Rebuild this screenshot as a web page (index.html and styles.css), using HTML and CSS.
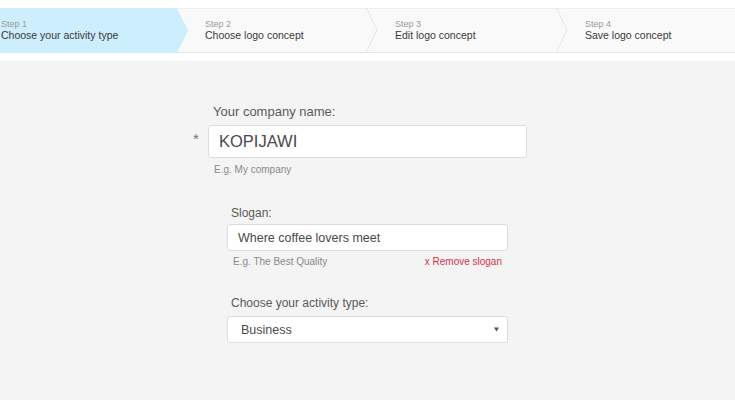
FILE: index.html
```html
<!DOCTYPE html>
<html>
<head>
<meta charset="utf-8">
<link rel="stylesheet" href="styles.css">
</head>
<body>
<div class="topgap"></div>
<nav class="steps">
  <div class="step step-active">
    <span class="step-num">Step 1</span>
    <span class="step-title">Choose your activity type</span>
  </div>
  <div class="step">
    <span class="step-num">Step 2</span>
    <span class="step-title">Choose logo concept</span>
    <svg class="chev" width="12" height="44" viewBox="0 0 12 44"><polyline points="0.5,0 11,22 0.5,44" fill="none" stroke="#e4e4e4" stroke-width="1"/></svg>
  </div>
  <div class="step">
    <span class="step-num">Step 3</span>
    <span class="step-title">Edit logo concept</span>
    <svg class="chev" width="12" height="44" viewBox="0 0 12 44"><polyline points="0.5,0 11,22 0.5,44" fill="none" stroke="#e4e4e4" stroke-width="1"/></svg>
  </div>
  <div class="step step-last">
    <span class="step-num">Step 4</span>
    <span class="step-title">Save logo concept</span>
  </div>
</nav>
<div class="midgap"></div>
<main class="panel">
  <form class="form">
    <label class="label-main">Your company name:</label>
    <div class="field-row">
      <span class="req">*</span>
      <div class="input input-main">KOPIJAWI</div>
    </div>
    <div class="hint hint-main">E.g. My company</div>

    <div class="sub">
      <label class="label-sub label-slogan">Slogan:</label>
      <div class="input input-sub">Where coffee lovers meet</div>
      <div class="hint-row">
        <span class="hint">E.g. The Best Quality</span>
        <span class="remove">x Remove slogan</span>
      </div>

      <label class="label-sub label-type">Choose your activity type:</label>
      <div class="input input-sub select">
        <span>Business</span>
        <svg class="caret" width="5" height="5" viewBox="0 0 5 5"><polygon points="0,0.5 5,0.5 2.5,4.5" fill="#555"/></svg>
      </div>
    </div>
  </form>
</main>
</body>
</html>
```

FILE: styles.css
```css
html, body {
  margin: 0;
  padding: 0;
  background: #ffffff;
  font-family: "Liberation Sans", Arial, sans-serif;
  color: #333;
}

.topgap { height: 8px; }

.steps {
  display: flex;
  height: 44px;
  background: #f9f9f9;
  border-bottom: 1px solid #e6e6e6;
  box-shadow: inset 0 1px 0 #eeeeee;
}

.step {
  position: relative;
  width: 190px;
  flex: none;
  padding-left: 17px;
  box-sizing: border-box;
  display: flex;
  flex-direction: column;
  justify-content: center;
  padding-bottom: 1px;
}

.step-active {
  width: 188px;
  padding-left: 1px;
  background: #cdeefd;
  margin-bottom: -1px;
  height: 45px;
  clip-path: polygon(0 0, 177px 0, 188px 50%, 177px 100%, 0 100%);
}

.step-last { flex: 1; width: auto; }

.step-num {
  font-size: 9px;
  line-height: 10px;
  color: #9a9a9a;
}

.step-title {
  font-size: 10.5px;
  line-height: 12px;
  color: #3a3a3a;
}

.chev {
  position: absolute;
  right: 0;
  top: 0;
}

.midgap { height: 8px; }

.panel {
  background: #f4f4f4;
  height: 340px;
}

.form {
  padding: 43px 0 0 193px;
  display: flex;
  flex-direction: column;
  align-items: flex-start;
}

.label-main {
  display: block;
  font-size: 13px;
  line-height: 15px;
  color: #5a5a5a;
  padding-left: 20px;
  margin-bottom: 6px;
}

.field-row {
  display: flex;
  align-items: flex-start;
}

.req {
  width: 15px;
  font-size: 15px;
  line-height: 15px;
  color: #777;
  padding-top: 6px;
}

.input {
  box-sizing: border-box;
  background: #fff;
  border: 1px solid #dcdcdc;
  border-radius: 3px;
  display: flex;
  align-items: center;
  color: #4a4a4a;
}

.input-main {
  width: 319px;
  height: 33px;
  padding-left: 10px;
  font-size: 16.5px;
}

.hint {
  font-size: 10px;
  line-height: 12px;
  color: #8a8a8a;
}

.hint-main {
  padding-left: 21px;
  margin-top: 6px;
}

.sub {
  margin-left: 34px;
  display: flex;
  flex-direction: column;
  width: 281px;
}

.label-sub {
  display: block;
  font-size: 12px;
  line-height: 14px;
  color: #5a5a5a;
  padding-left: 4px;
}

.label-slogan {
  margin-top: 30px;
  margin-bottom: 4px;
}

.label-type {
  margin-top: 28px;
  margin-bottom: 6px;
}

.input-sub {
  width: 281px;
  height: 27px;
  padding-left: 10px;
  font-size: 12.5px;
}

.hint-row {
  display: flex;
  justify-content: space-between;
  margin-top: 5px;
  padding-left: 6px;
  padding-right: 6px;
}

.remove {
  font-size: 10px;
  line-height: 12px;
  color: #d2334a;
}

.select {
  justify-content: space-between;
  padding-left: 13px;
  padding-right: 8px;
}

.caret { display: block; }
```
